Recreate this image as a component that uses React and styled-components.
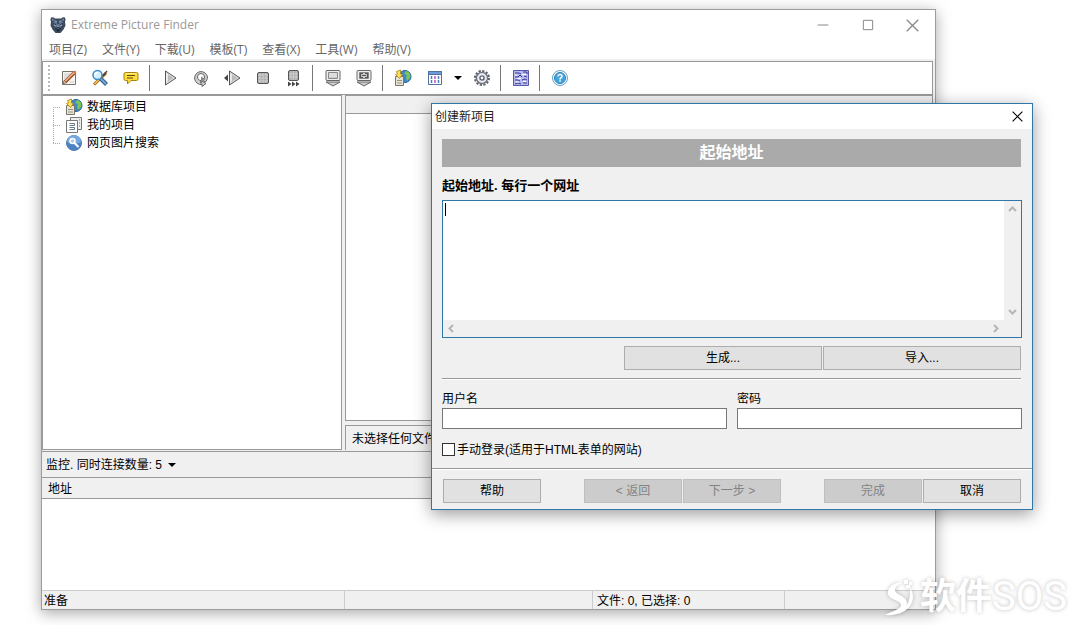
import React from 'react'
import styled, { createGlobalStyle } from 'styled-components'

const GlobalStyle = createGlobalStyle`
  * {
    box-sizing: border-box;
  }

  html,
  body,
  #root {
    height: 100%;
    margin: 0;
  }

  body {
    overflow: hidden;
    background: #fff;
    color: #000;
    font: 12px/18px 'Liberation Sans', 'Noto Sans CJK SC', sans-serif;
  }

  button,
  input,
  textarea {
    font: inherit;
    color: inherit;
  }
`

const Desktop = styled.div`
  position: relative;
  height: 100%;
`

const MainWindow = styled.main`
  position: absolute;
  top: 9px;
  right: 145px;
  bottom: 15px;
  left: 41px;
  display: flex;
  flex-direction: column;
  background: #f0f0f0;
  border: 1px solid #9c9c9c;
  box-shadow: 0 3px 14px rgba(0, 0, 0, 0.35);
`

const TitleBar = styled.header`
  display: flex;
  align-items: center;
  height: 30px;
  padding: 0 0 0 7px;
  gap: 4px;
  background: #fff;
`

const AppTitle = styled.h1`
  flex: 1;
  margin: 0;
  color: #999;
  font: 12px/18px 'Open Sans', sans-serif;
`

const WindowButtons = styled.div`
  display: flex;
`

const WindowButton = styled.button`
  display: flex;
  align-items: center;
  justify-content: center;
  width: ${({ $width }) => $width || 45}px;
  height: 25px;
  padding: 0;
  background: transparent;
  border: none;
`

const MenuBar = styled.nav`
  display: flex;
  height: 19px;
  padding-left: 7px;
  gap: 15px;
  background: #fff;
`

const MenuItem = styled.button`
  padding: 0;
  color: #666;
  background: transparent;
  border: none;
  font: 12px/20px 'Open Sans', 'Noto Sans CJK SC', sans-serif;
`

const ToolBar = styled.div`
  display: flex;
  align-items: center;
  height: 34px;
  margin: 2px 2px 0 0;
  padding-left: 5px;
  background: #fff;
  border: 1px solid #999;
`

const Grip = styled.div`
  width: 5px;
  height: 26px;
  border-left: 2px dotted #bbb;
`

const ToolButton = styled.button`
  display: flex;
  align-items: center;
  justify-content: center;
  width: ${({ $narrow }) => ($narrow ? 17 : 31)}px;
  height: 28px;
  padding: 0;
  background: transparent;
  border: none;
`

const Divider = styled.div`
  width: 1px;
  height: 26px;
  margin: 0 4px 0 3px;
  background: #777;
`

const Caret = styled.span`
  display: inline-block;
  border: 4px solid transparent;
  border-top-color: #000;
  border-bottom: none;
`

const Workspace = styled.div`
  display: flex;
  flex: 1;
  min-height: 0;
  gap: 3px;
`

const TreePanel = styled.ul`
  width: 300px;
  margin: 0;
  padding: 2px 0 0 10px;
  list-style: none;
  background: #fff;
  border: 1px solid #999;
`

const TreeItem = styled.li`
  display: flex;
  align-items: center;
  height: 18px;
  gap: 4px;
`

const Branch = styled.span`
  align-self: stretch;
  width: 8px;
  background:
    repeating-linear-gradient(#aaa 0 1px, transparent 1px 2px) 0
      ${({ $first }) => ($first ? '9px' : '0')} / 1px
      ${({ $last }) => ($last ? '9px' : '18px')} no-repeat,
    repeating-linear-gradient(90deg, #aaa 0 1px, transparent 1px 2px) 0 9px /
      100% 1px no-repeat;
`

const RightColumn = styled.div`
  display: flex;
  flex: 1;
  flex-direction: column;
  min-width: 0;
  margin-right: 2px;
  gap: 4px;
`

const FileList = styled.section`
  flex: 1;
  background: #fff;
  border: 1px solid #999;
`

const FileListHeader = styled.div`
  height: 18px;
  background: #f0f0f0;
  border-bottom: 1px solid #999;
`

const FileInfo = styled.div`
  height: 25px;
  padding-left: 6px;
  border: 1px solid #999;
  border-bottom: none;
  line-height: 26px;
`

const MonitorBar = styled.div`
  display: flex;
  align-items: center;
  height: 26px;
  margin-top: 1px;
  border-top: 1px solid #999;
`

const MonitorButton = styled.button`
  display: flex;
  align-items: center;
  padding: 0 4px;
  gap: 6px;
  background: transparent;
  border: none;
`

const QueuePanel = styled.div`
  height: 113px;
  background: #fff;
`

const Queue = styled.table`
  width: 100%;
  border-collapse: collapse;

  th {
    height: 20px;
    padding: 2px 6px 0;
    background: #f0f0f0;
    border: solid #999;
    border-width: 1px 0;
    font-weight: normal;
    line-height: 18px;
    text-align: left;
  }
`

const StatusBar = styled.footer`
  display: grid;
  grid-template-columns: 303px 248px 192px 1fr;
  height: 19px;
  border-top: 1px solid #ccc;
  line-height: 20px;
`

const StatusCell = styled.span`
  height: 18px;
  padding-left: ${({ $indent }) => $indent || 2}px;
  border-right: 1px solid #ccc;

  &:last-child {
    border-right: none;
  }
`

const Dialog = styled.form`
  position: absolute;
  top: 103px;
  right: 48px;
  left: 431px;
  background: #f0f0f0;
  border: 1px solid #2f77a8;
  box-shadow: 0 4px 16px rgba(0, 0, 0, 0.4);
`

const DialogTitle = styled.div`
  display: flex;
  align-items: center;
  justify-content: space-between;
  height: 25px;
  padding-left: 3px;
  background: #fff;

  h2 {
    margin: 0;
    color: #222;
    font-size: 12px;
    font-weight: normal;
    line-height: 16px;
  }
`

const DialogBody = styled.div`
  padding: 10px 10px 0;
`

const Banner = styled.h3`
  height: 28px;
  margin: 0 1px 0 0;
  color: #fff;
  background: #aaa;
  font-size: 16px;
  line-height: 27px;
  text-align: center;
`

const AddressLabel = styled.label`
  display: block;
  height: 33px;
  font-size: 13px;
  font-weight: bold;
  line-height: 38px;
`

const AddressBox = styled.div`
  position: relative;
  display: grid;
  grid-template-columns: 1fr 17px;
  grid-template-rows: 119px 17px;
  border: 1px solid #2f77a8;
`

const AddressInput = styled.textarea`
  width: 100%;
  height: 100%;
  padding: 1px 2px;
  background: #fff;
  border: none;
  outline: none;
  overflow: hidden;
  resize: none;
  white-space: pre;
  caret-color: transparent;
`

const TextCursor = styled.span`
  position: absolute;
  top: 2px;
  left: 2px;
  width: 1px;
  height: 13px;
  background: #000;
`

const ScrollTrack = styled.div`
  display: flex;
  flex-direction: ${({ $vertical }) => ($vertical ? 'column' : 'row')};
  justify-content: space-between;
`

const ScrollButton = styled.button`
  display: flex;
  align-items: center;
  justify-content: center;
  width: 17px;
  height: 17px;
  padding: 0;
  background: transparent;
  border: none;
`

const AddressActions = styled.div`
  display: grid;
  grid-template-columns: 198px 198px;
  justify-content: end;
  gap: 1px;
  padding: 8px 1px 8px 0;
`

const Button = styled.button`
  min-width: 98px;
  height: 24px;
  padding: 0;
  background: #e1e1e1;
  border: 1px solid #adadad;
  line-height: 22px;

  &:disabled {
    color: #838383;
    background: #ccc;
    border-color: #bfbfbf;
  }
`

const Rule = styled.hr`
  height: 2px;
  margin: ${({ $inset }) => ($inset ? '0 1px 0 0' : '0')};
  background: #fff;
  border: none;
  border-top: 1px solid #999;
`

const LoginFields = styled.div`
  display: grid;
  grid-template-columns: 1fr 1fr;
  padding-top: 10px;
  gap: 10px;
`

const Field = styled.label`
  display: flex;
  flex-direction: column;

  input {
    width: 100%;
    height: 21px;
    padding: 0 3px;
    background: #fff;
    border: 1px solid #777;
    border-radius: 0;
    outline: none;
  }
`

const CheckLabel = styled.label`
  display: flex;
  align-items: center;
  height: 39px;
  padding-top: 2px;
  gap: 2px;

  input {
    width: 13px;
    height: 13px;
    margin: 0;
    appearance: none;
    background: #fff;
    border: 1px solid #333;
  }
`

const DialogFooter = styled.div`
  display: flex;
  justify-content: space-between;
  padding: 9px 11px 6px;
`

const ButtonPair = styled.div`
  display: flex;
  gap: 1px;
`

const Watermark = styled.div`
  position: absolute;
  right: 14px;
  bottom: 6px;
  display: flex;
  align-items: center;
  height: 44px;
  color: #fff;
  font-family: Roboto, 'Noto Sans CJK SC', sans-serif;
  font-size: 40px;
  line-height: 44px;
  text-shadow: 0 0 4px rgba(0, 0, 0, 0.25);
  pointer-events: none;

  svg {
    margin-right: 4px;
    filter: drop-shadow(0 0 2px rgba(0, 0, 0, 0.25));
  }

  span {
    font-size: 36px;
    font-weight: bold;
  }
`

const Icon = ({ size = 18, children }) => (
  <svg width={size} height={size} viewBox='0 0 18 18' fill='none' aria-hidden>
    {children}
  </svg>
)

const PantherIcon = () => (
  <Icon>
    <path d='M2 1.500q2-1 4 1h6q2-2 4-1 1 2 0 4l.5 4-2 4-3 3.500H6.500l-3-3.500-2-4 .5-4q-1-2 0-4z' fill='#3c4a5c' />
    <path d='M3 2.500l2 1-1.500 1.500zM15 2.500l-2 1 1.500 1.500z' fill='#8f9fb5' />
    <path d='M5 4l4 1 4-1 1.500 4-2.500 2-1 3H7l-1-3-2.500-2z' fill='#5d7090' />
    <path d='M4 7.500l3 1.500M14 7.500L11 9M6 13l3-1.500 3 1.500M9 5v3' stroke='#1b2533' />
    <path d='M5 9l1.500.5M11.500 9.500L13 9' stroke='#c6d4df' />
    <path d='M7 13.500h4L9 16z' fill='#161e2a' />
    <path d='M6 5l2 1M12 5l-2 1M8 10h2' stroke='#8fa3bf' />
  </Icon>
)

const NewProjectIcon = () => (
  <Icon>
    <path d='M2.500 2.500h13v13h-13z' fill='#f4f4f2' stroke='#77736b' />
    <path d='M4 5h8M4 7h6M4 9h4M10 13h4' stroke='#ccc' />
    <path d='M5 13L14 4' stroke='#844020' strokeWidth='3.500' />
    <path d='M5 12.500L14 3.500' stroke='#f2a878' strokeWidth='1.800' />
    <path d='M13 3l2-1.500L16.500 3 15 5z' fill='#de7a55' />
    <path d='M3 15l1-3.500 2.500 2z' fill='#efd6a8' stroke='#704c38' strokeWidth='.7' />
  </Icon>
)

const PropertiesIcon = () => (
  <Icon>
    <path d='M15 4L3 15.500' stroke='#9c631e' strokeWidth='3' />
    <path d='M9 9.500l-5.500 5.500' stroke='#ffc64f' strokeWidth='1.500' />
    <path d='M10 10l5.500 5.500' stroke='#345c88' strokeWidth='4' />
    <path d='M10 10l5 5' stroke='#6caadb' strokeWidth='2' />
    <circle cx='6.500' cy='6' r='4.500' fill='#d5f0ff' stroke='#3c8dc8' strokeWidth='1.500' />
    <path d='M4 6.500c0-2 1-3 3-3' stroke='#fff' strokeWidth='1.500' />
    <path d='M12 7l4-5' stroke='#59423a' strokeWidth='1.500' />
  </Icon>
)

const CommentIcon = () => (
  <Icon>
    <path
      d='M3.500 3.500h11q1.500 0 1.500 1.500v5q0 1.500-1.500 1.500H9L5.500 15v-3.500h-2Q2 11.500 2 10V5q0-1.500 1.500-1.500z'
      fill='#ffdc35'
      stroke='#a98312'
    />
    <path d='M4 4.500h10' stroke='#fff27f' />
    <path d='M5 6.500h8M5 9h6' stroke='#5f4b15' />
  </Icon>
)

const StartIcon = () => (
  <Icon>
    <path d='M4.500 2v14L15 9z' fill='#e4e4e4' stroke='#555' />
    <path d='M6.500 5v8l6-4z' fill='#bbb' />
    <path d='M6 5v7' stroke='#fff' />
  </Icon>
)

const RestartIcon = () => (
  <Icon>
    <path
      d='M9 14.500v-3l5 3-4 3v-2A6.500 6.500 0 1 1 15.500 8c0 2-1 4-2 5l-2.500-1.500c1-1 1.500-2 1.500-3.500a3.500 3.500 0 1 0-7 0c0 2 1.500 3.500 3.500 3.500z'
      fill='#ccc'
      stroke='#666'
    />
    <path d='M9 7.500v5l4.500-2.500z' fill='#888' />
  </Icon>
)

const ResumeIcon = () => (
  <Icon>
    <path d='M6.500 2v14L17 9z' fill='#ddd' stroke='#555' />
    <path d='M8.500 5v8l6-4z' fill='#bbb' />
    <path d='M8 5v7' stroke='#fff' />
    <path d='M5 5.500v7L1 9z' fill='#444' />
  </Icon>
)

const StopIcon = ({ all }) => (
  <Icon>
    <rect x='3.500' y={all ? 1.5 : 3.5} width={all ? 10 : 11} height={all ? 10 : 11} rx='1.500' fill='#aaa' stroke='#555' />
    {all ? (
      <>
        <path d='M6 2v9M8.500 2v9M11 2v9M4 5h9M4 8h9' stroke='#ddd' strokeWidth='.7' />
        <path d='M3 12.500v5L6.500 15zM7 12.500v5l3.500-2.500zM11 12.500v5l3.500-2.500z' fill='#444' />
      </>
    ) : (
      <path d='M6 4v10M9 4v10M12 4v10M4 6h10M4 9h10M4 12h10' stroke='#ddd' strokeWidth='.7' />
    )}
  </Icon>
)

const MonitorIcon = ({ linked }) => (
  <Icon>
    <rect x='2' y='1.500' width='14' height='10' rx='1' fill='#eee' stroke='#666' />
    <path d='M4.500 3.500h9v6h-9z' fill='#ccc' stroke='#888' />
    {linked ? (
      <path d='M8 4.500H5.500v4H8M10 4.500h2.500v4H10M7 6.500h4' stroke='#555' strokeWidth='1.200' />
    ) : (
      <path d='M5 5h8M5 7h8' stroke='#eee' />
    )}
    <path d='M2 13h14l-7 4z' fill='#ccc' stroke='#666' />
  </Icon>
)

const DatabaseIcon = () => (
  <Icon>
    <circle cx='11' cy='7.500' r='6' fill='#3e88ca' stroke='#285d95' />
    <path d='M12 2c4 1 5 4 4 7l-3 3-1-4 1-2-3-1z' fill='#7cc45a' />
    <path d='M1.500 7.500h8v9h-8z' fill='#e9e5d5' stroke='#77756a' />
    <path d='M3 11.500h5M3 14h5' stroke='#96917e' />
    <path d='M6.500 1l-4 1.500L3.500 5 1.500 5.500l4 4 3-4-2-.5z' fill='#ffe052' stroke='#a98019' strokeWidth='.8' />
  </Icon>
)

const CalendarIcon = () => (
  <Icon>
    <path d='M3.500 2.500h13v13h-13z' fill='#fff' stroke='#4e709e' />
    <path d='M3.500 2.500h13v3h-13z' fill='#6a9bda' stroke='#4e709e' />
    <path d='M6.500 7v7M13.500 7v7' stroke='#5577b8' strokeWidth='1.500' strokeDasharray='3 1' />
    <path d='M10 7v7' stroke='#b65ac0' strokeWidth='1.500' strokeDasharray='3 1' />
  </Icon>
)

const GearIcon = () => (
  <Icon>
    <circle cx='9' cy='9' r='7' stroke='#5b606a' strokeWidth='2' strokeDasharray='2.200 1.465' />
    <circle cx='9' cy='9' r='5.500' fill='#c9cdd6' stroke='#70757f' strokeWidth='1.500' />
    <circle cx='9' cy='9' r='4' stroke='#eceef2' strokeWidth='1.500' />
    <circle cx='9' cy='9' r='2' fill='#fff' stroke='#4c5362' strokeWidth='1.200' />
  </Icon>
)

const LogIcon = () => (
  <Icon>
    <path d='M1.500 1.500h15v15h-15z' fill='#b8b9ef' stroke='#5559a6' />
    <path d='M3 4h4l2 1M11 3h4v2M3 8h3l2-2 2 2M12 7l3 1M3 11h3l2 1M10 11l3-1 2 1M3 15l3-1 3 1M11 14h4' stroke='#343a91' />
    <path d='M3 6h2M10 5.500h4M5 9.500h4M11 12.500h3M4 13h3' stroke='#fff' />
  </Icon>
)

const HelpIcon = () => (
  <Icon>
    <circle cx='9' cy='9' r='7.500' fill='#fff' stroke='#5f9fc8' />
    <circle cx='9' cy='9' r='5.500' fill='#43a6dd' stroke='#2a80b8' />
    <path d='M7 7.500c0-3 4.500-2.500 4 0-.3 1.300-2 1-2 3' stroke='#fff' strokeWidth='1.500' />
    <path d='M8.300 12h1.500' stroke='#fff' strokeWidth='1.500' />
  </Icon>
)

const ProjectsIcon = () => (
  <Icon>
    <path d='M5.500 1.500h11v12h-11z' fill='#eee' stroke='#777' />
    <path d='M1.500 4.500h11v12h-11z' fill='#fff' stroke='#777' />
    <path d='M4.500 7.500h5v2h-5M4.500 13.500h5v-2h-5' stroke='#64798c' />
    <path d='M14 4h1M14 7h1M14 10h1' stroke='#777' />
  </Icon>
)

const SearchIcon = () => (
  <Icon>
    <circle cx='9' cy='9' r='7.500' fill='#4b83c7' stroke='#557ca8' />
    <path d='M2 8a7 7 0 0 1 14 0c-3 2-10 3-14 0z' fill='#76a9df' />
    <circle cx='7.500' cy='7' r='2.500' fill='#a8cdf0' stroke='#fff' strokeWidth='1.500' />
    <path d='M9.500 9l4 4' stroke='#fff' strokeWidth='2' />
  </Icon>
)

const CloseIcon = ({ color, size }) => (
  <Icon size={size}>
    <path d='M1 1l16 16M17 1L1 17' stroke={color} strokeWidth='1.800' />
  </Icon>
)

const Arrow = ({ turn }) => (
  <Icon size={9}>
    <path d='M2 12l7-7 7 7' stroke='#b5b5b5' strokeWidth='4' transform={`rotate(${turn} 9 9)`} />
  </Icon>
)

const menus = ['项目(Z)', '文件(Y)', '下载(U)', '模板(T)', '查看(X)', '工具(W)', '帮助(V)']

const toolGroups = [
  [
    ['新建项目', <NewProjectIcon />],
    ['项目属性', <PropertiesIcon />],
    ['备注', <CommentIcon />]
  ],
  [
    ['开始', <StartIcon />],
    ['重新开始', <RestartIcon />],
    ['继续', <ResumeIcon />],
    ['停止', <StopIcon />],
    ['全部停止', <StopIcon all />]
  ],
  [
    ['监控', <MonitorIcon />],
    ['连接', <MonitorIcon linked />]
  ],
  [
    ['数据库', <DatabaseIcon />],
    ['计划', <CalendarIcon />],
    ['计划选项', <Caret />, true],
    ['设置', <GearIcon />]
  ],
  [['日志', <LogIcon />]],
  [['帮助', <HelpIcon />]]
]

const projects = [
  ['数据库项目', <DatabaseIcon />],
  ['我的项目', <ProjectsIcon />],
  ['网页图片搜索', <SearchIcon />]
]

const FinderWindow = () => (
  <MainWindow>
    <TitleBar>
      <PantherIcon />
      <AppTitle>Extreme Picture Finder</AppTitle>
      <WindowButtons>
        <WindowButton aria-label='最小化'>
          <Icon size={12}>
            <path d='M1 9h16' stroke='#888' strokeWidth='1.500' />
          </Icon>
        </WindowButton>
        <WindowButton aria-label='最大化'>
          <Icon size={12}>
            <path d='M2 2h14v14H2z' stroke='#888' strokeWidth='1.500' />
          </Icon>
        </WindowButton>
        <WindowButton aria-label='关闭'>
          <CloseIcon color='#888' size={13} />
        </WindowButton>
      </WindowButtons>
    </TitleBar>
    <MenuBar>
      {menus.map(menu => (
        <MenuItem key={menu}>{menu}</MenuItem>
      ))}
    </MenuBar>
    <ToolBar>
      <Grip />
      {toolGroups.map((group, index) => (
        <React.Fragment key={index}>
          {index > 0 && <Divider />}
          {group.map(([name, icon, narrow]) => (
            <ToolButton key={name} aria-label={name} $narrow={narrow}>
              {icon}
            </ToolButton>
          ))}
        </React.Fragment>
      ))}
    </ToolBar>
    <Workspace>
      <TreePanel>
        {projects.map(([name, icon], index) => (
          <TreeItem key={name}>
            <Branch $first={index === 0} $last={index === projects.length - 1} />
            {icon}
            {name}
          </TreeItem>
        ))}
      </TreePanel>
      <RightColumn>
        <FileList>
          <FileListHeader />
        </FileList>
        <FileInfo>未选择任何文件</FileInfo>
      </RightColumn>
    </Workspace>
    <MonitorBar>
      <MonitorButton>
        监控. 同时连接数量: 5 <Caret />
      </MonitorButton>
    </MonitorBar>
    <QueuePanel>
      <Queue>
        <thead>
          <tr>
            <th>地址</th>
          </tr>
        </thead>
      </Queue>
    </QueuePanel>
    <StatusBar>
      <StatusCell>准备</StatusCell>
      <StatusCell />
      <StatusCell $indent={4}>文件: 0, 已选择: 0</StatusCell>
      <StatusCell />
    </StatusBar>
  </MainWindow>
)

const NewProjectDialog = () => (
  <Dialog onSubmit={event => event.preventDefault()}>
    <DialogTitle>
      <h2>创建新项目</h2>
      <WindowButton type='button' $width={30} aria-label='关闭'>
        <CloseIcon color='#000' size={11} />
      </WindowButton>
    </DialogTitle>
    <DialogBody>
      <Banner>起始地址</Banner>
      <AddressLabel htmlFor='addresses'>起始地址. 每行一个网址</AddressLabel>
      <AddressBox>
        <AddressInput id='addresses' wrap='off' />
        <TextCursor />
        <ScrollTrack $vertical>
          <ScrollButton type='button' aria-label='向上'>
            <Arrow turn={0} />
          </ScrollButton>
          <ScrollButton type='button' aria-label='向下'>
            <Arrow turn={180} />
          </ScrollButton>
        </ScrollTrack>
        <ScrollTrack>
          <ScrollButton type='button' aria-label='向左'>
            <Arrow turn={270} />
          </ScrollButton>
          <ScrollButton type='button' aria-label='向右'>
            <Arrow turn={90} />
          </ScrollButton>
        </ScrollTrack>
      </AddressBox>
      <AddressActions>
        <Button type='button'>生成...</Button>
        <Button type='button'>导入...</Button>
      </AddressActions>
      <Rule $inset />
      <LoginFields>
        <Field>
          用户名
          <input type='text' />
        </Field>
        <Field>
          密码
          <input type='password' />
        </Field>
      </LoginFields>
      <CheckLabel>
        <input type='checkbox' />
        手动登录(适用于HTML表单的网站)
      </CheckLabel>
    </DialogBody>
    <Rule />
    <DialogFooter>
      <Button type='button'>帮助</Button>
      <ButtonPair>
        <Button type='button' disabled>
          &lt; 返回
        </Button>
        <Button type='button' disabled>
          下一步 &gt;
        </Button>
      </ButtonPair>
      <ButtonPair>
        <Button disabled>完成</Button>
        <Button type='button'>取消</Button>
      </ButtonPair>
    </DialogFooter>
  </Dialog>
)

const App = () => (
  <>
    <GlobalStyle />
    <Desktop>
      <FinderWindow />
      <NewProjectDialog />
      <Watermark>
        <svg width='32' height='38' viewBox='0 0 32 38' fill='#fff' aria-hidden>
          <path d='M19 5C10 4 4 9 4 15c0 7 13 7 13 12 0 4-8 6-16 10 13 1 22-4 22-12 0-7-12-8-12-13 0-3 3-6 8-7z' />
          <path d='M26 10c7 10 1 22-12 26 9-6 13-14 12-26z' />
          <path d='M20 2h4v4h-4zM25 4h3v3h-3zM22 7h4v3h-4z' />
        </svg>
        <span>软件</span>SOS
      </Watermark>
    </Desktop>
  </>
)

export default App
